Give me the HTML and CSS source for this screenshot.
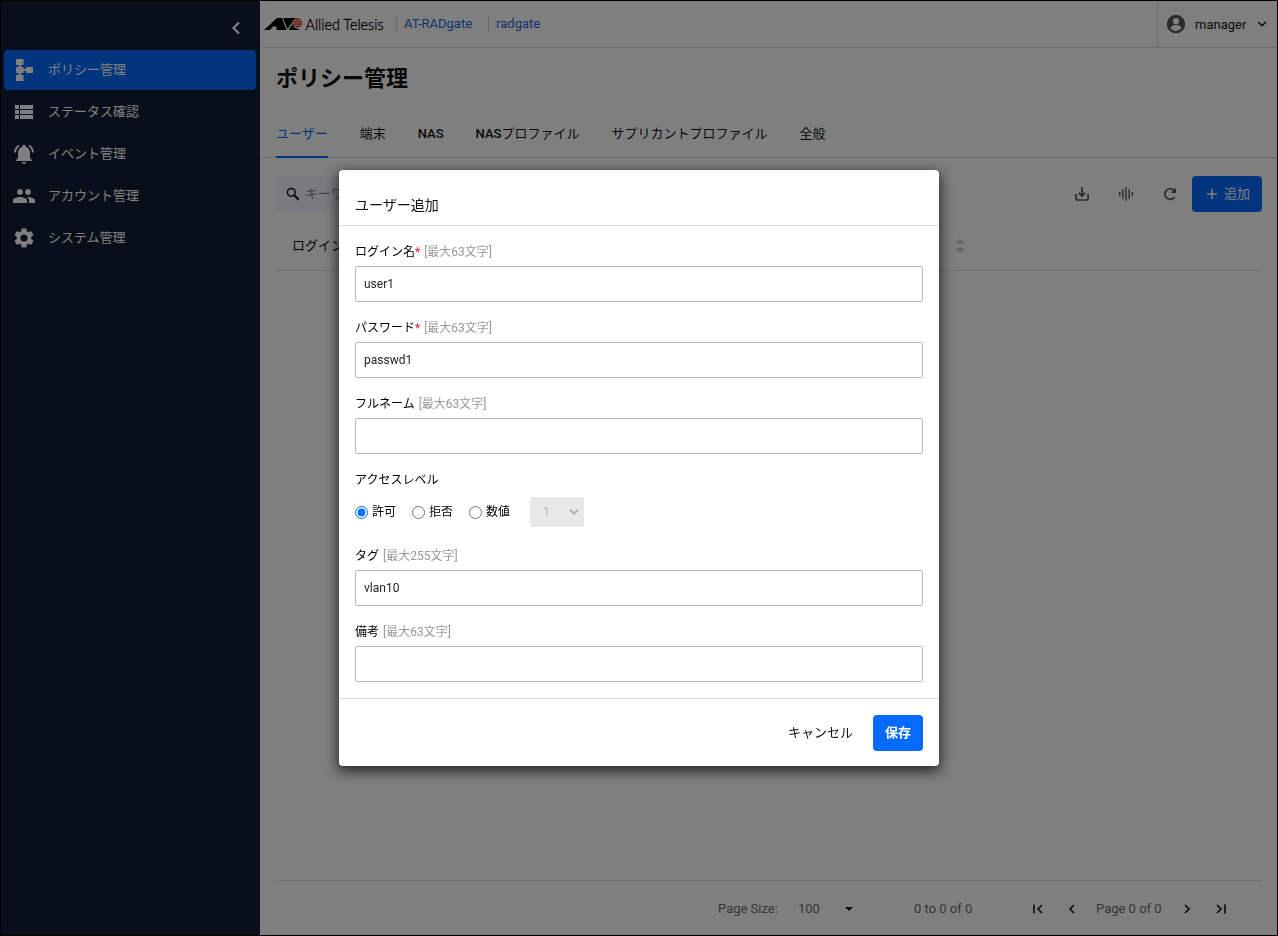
FILE: index.html
```html
<!DOCTYPE html>
<html lang="ja">
<head>
<meta charset="utf-8">
<title>ポリシー管理</title>
<link rel="stylesheet" href="styles.css">
</head>
<body>
<div class="app">
  <aside class="sidebar">
    <div class="collapse">
      <svg width="24" height="24" viewBox="0 0 24 24" fill="none" stroke="currentColor" stroke-width="2.2"><path d="M15 6.500 9.500 12l5.500 5.500"/></svg>
    </div>
    <nav class="menu">
      <a class="menu-item active"><svg width="24" height="24" viewBox="0 0 24 24" fill="currentColor"><path d="M4 1h7.500v6H9v2h2.500v2H14V9h7v6h-7v-2h-2.500v2H9v2h2.500v6H4v-6h2.500v-2H4V9h2.500V7H4z"/></svg><span>ポリシー管理</span></a>
      <a class="menu-item"><svg width="24" height="24" viewBox="0 0 24 24" fill="currentColor"><path d="M3 5h4v4H3zm5 0h13v4H8zM3 10h4v4H3zm5 0h13v4H8zM3 15h4v4H3zm5 0h13v4H8z"/></svg><span>ステータス確認</span></a>
      <a class="menu-item"><svg width="24" height="24" viewBox="0 0 24 24" fill="currentColor"><path d="M7.580 4.080 6.150 2.650C3.750 4.480 2.170 7.300 2.030 10.500h2a8.450 8.450 0 0 1 3.550-6.420zm12.390 6.420h2c-.15-3.200-1.730-6.020-4.120-7.850l-1.420 1.430a8.500 8.500 0 0 1 3.540 6.420zM18 11c0-3.070-1.640-5.640-4.500-6.320V4a1.500 1.500 0 0 0-3 0v.68C7.630 5.360 6 7.920 6 11v5l-2 2v1h16v-1l-2-2zm-6 11c.14 0 .27-.01.400-.04.650-.14 1.180-.58 1.440-1.180.1-.24.150-.5.150-.78h-4c.01 1.100.9 2 2.010 2z"/></svg><span>イベント管理</span></a>
      <a class="menu-item"><svg width="24" height="24" viewBox="0 0 24 24" fill="currentColor"><path d="M16 11c1.660 0 2.990-1.340 2.990-3S17.660 5 16 5s-3 1.340-3 3 1.340 3 3 3zm-8 0c1.660 0 2.990-1.340 2.990-3S9.660 5 8 5 5 6.340 5 8s1.340 3 3 3zm0 2c-2.330 0-7 1.170-7 3.500V19h14v-2.500C15 14.170 10.330 13 8 13zm8 0c-.29 0-.62.020-.97.050 1.160.84 1.970 1.970 1.970 3.450V19h6v-2.500c0-2.330-4.670-3.500-7-3.500z"/></svg><span>アカウント管理</span></a>
      <a class="menu-item"><svg width="24" height="24" viewBox="0 0 24 24" fill="currentColor"><path d="M19.140 12.940c.04-.3.060-.61.060-.94 0-.32-.02-.64-.07-.94l2.030-1.580c.18-.14.230-.41.120-.61l-1.920-3.320c-.12-.22-.37-.29-.59-.22l-2.390.96c-.5-.38-1.030-.7-1.620-.94l-.36-2.540c-.04-.24-.24-.41-.48-.41h-3.840c-.24 0-.43.170-.47.410l-.36 2.540c-.59.240-1.130.570-1.620.94l-2.390-.96c-.22-.08-.47 0-.59.220L2.740 8.870c-.12.210-.08.470.12.610l2.030 1.580c-.05.300-.09.630-.09.940s.02.640.07.940l-2.030 1.580c-.18.140-.23.410-.12.610l1.920 3.320c.12.220.37.290.59.220l2.390-.96c.5.380 1.030.7 1.620.94l.36 2.540c.05.240.24.410.48.410h3.840c.24 0 .44-.17.470-.41l.36-2.540c.59-.24 1.130-.56 1.620-.94l2.390.96c.22.080.47 0 .59-.22l1.920-3.320c.12-.22.070-.47-.12-.61zM12 15.600A3.600 3.600 0 1 1 12 8.400a3.600 3.600 0 0 1 0 7.200z"/></svg><span>システム管理</span></a>
    </nav>
  </aside>
  <main class="main">
    <header class="topbar">
      <svg class="logo" width="122" height="22" viewBox="0 0 122 22">
        <path fill="#000" d="M0 17 13 5h5l4.500 12H12.500v-3.500H9L6 17z"/>
        <path fill="#000" d="M19 5h12.500l-8 11z"/>
        <path fill="#000" d="M31 8l-6.500 9H36l-3.500-1.500-3-1.500 2.500-3z"/>
        <circle cx="33.700" cy="10" r="4.700" fill="#d9342b"/>
        <path stroke="#fff" stroke-width=".8" d="M28.800 7.500h10M28.800 9.900h10M28.800 12.300h10"/>
        <text class="logo-text" x="41.500" y="16.500" textLength="78" lengthAdjust="spacingAndGlyphs">Allied Telesis</text>
      </svg>
      <a class="crumb">AT-RADgate</a>
      <a class="crumb crumb-last">radgate</a>
      <div class="account">
        <svg width="22" height="22" viewBox="0 0 24 24" fill="#555"><path d="M12 2a10 10 0 1 0 0 20 10 10 0 0 0 0-20zm0 3.500a3.400 3.400 0 1 1 0 6.800 3.400 3.400 0 0 1 0-6.800zm0 14c-2.500 0-4.710-1.280-6-3.220.03-1.990 4-3.080 6-3.080s5.970 1.090 6 3.080A7.200 7.200 0 0 1 12 19.500z"/></svg>
        <span>manager</span>
        <svg width="10" height="8" viewBox="0 0 10 8" fill="none" stroke="#111" stroke-width="1.500"><path d="M1.200 2 5 5.800 8.800 2"/></svg>
      </div>
    </header>
    <h1 class="title">ポリシー管理</h1>
    <div class="tabs">
      <a class="tab selected">ユーザー</a><a class="tab">端末</a><a class="tab"><b>NAS</b></a><a class="tab"><b>NAS</b>プロファイル</a><a class="tab">サプリカントプロファイル</a><a class="tab">全般</a>
    </div>
    <div class="toolbar">
      <div class="search">
        <svg width="14" height="14" viewBox="0 0 14 14" fill="none" stroke="#111"><circle cx="5.300" cy="5.300" r="3.900" stroke-width="1.500"/><path d="M8.300 8.300 12.700 12.700" stroke-width="2"/></svg>
        <span>キーワード</span>
      </div>
      <div class="tools">
        <svg width="16" height="16" viewBox="0 0 16 16" fill="none" stroke="#555" stroke-width="1.700"><path d="M8 1v9M4.700 6.800 8 10l3.300-3.200M1.900 8v4.800q0 1.200 1.200 1.200h9.800q1.200 0 1.200-1.200V8"/></svg>
        <svg width="16" height="16" viewBox="0 0 16 16" fill="none" stroke="#5c5c5c" stroke-width="1.400"><path d="M1.700 6v4M4.800 3v10M8 1v14M11.200 3v10M14.300 6v4"/></svg>
        <svg width="16" height="16" viewBox="0 0 16 16" fill="none" stroke="#555" stroke-width="1.700"><path d="M12.600 11A5.300 5.300 0 1 1 12.200 4.600"/><path d="M14 1.800V7H8.800z" fill="#555" stroke="none"/></svg>
      </div>
      <button class="btn-add"><svg width="12" height="12" viewBox="0 0 12 12" stroke="#fff" stroke-width="1.600"><path d="M1 6h10M6 1v10"/></svg><span>追加</span></button>
    </div>
    <div class="table-head">
      <span>ログイン名</span>
      <svg class="sort" width="10" height="14" viewBox="0 0 10 14" fill="#ccc"><path d="M0 5 5 0l5 5zM0 9h10l-5 5z"/></svg>
    </div>
    <div class="grid-body"></div>
    <footer class="pager">
      <span class="page-size">Page Size:</span>
      <span class="size-value">100</span>
      <svg class="caret" width="8" height="4" viewBox="0 0 8 4" fill="#111"><path d="M0 0h8L4 4z"/></svg>
      <span class="rows">0 to 0 of 0</span>
      <svg class="first" width="12" height="12" viewBox="0 0 12 12" fill="none" stroke="#111" stroke-width="1.600"><path d="M2 1.500v9M10 2 6 6l4 4"/></svg>
      <svg class="prev" width="12" height="12" viewBox="0 0 12 12" fill="none" stroke="#111" stroke-width="1.600"><path d="M8 2 4 6l4 4"/></svg>
      <span class="page-no">Page 0 of 0</span>
      <svg class="next" width="12" height="12" viewBox="0 0 12 12" fill="none" stroke="#111" stroke-width="1.600"><path d="M4 2l4 4-4 4"/></svg>
      <svg class="last" width="12" height="12" viewBox="0 0 12 12" fill="none" stroke="#111" stroke-width="1.600"><path d="M2 2l4 4-4 4M10 1.500v9"/></svg>
    </footer>
  </main>
</div>
<div class="overlay">
  <section class="modal">
    <h2 class="modal-head">ユーザー追加</h2>
    <form class="modal-body">
      <div class="field"><label class="label">ログイン名<i>*</i><em>[最大63文字]</em></label><input class="input" value="user1"></div>
      <div class="field"><label class="label">パスワード<i>*</i><em>[最大63文字]</em></label><input class="input" value="passwd1"></div>
      <div class="field"><label class="label">フルネーム<em>[最大63文字]</em></label><input class="input"></div>
      <div class="field">
        <span class="label">アクセスレベル</span>
        <div class="radios">
          <label class="radio"><input type="radio" name="level" checked>許可</label>
          <label class="radio"><input type="radio" name="level">拒否</label>
          <label class="radio"><input type="radio" name="level">数値</label>
          <div class="select"><span>1</span><svg width="10" height="8" viewBox="0 0 10 8" fill="none" stroke="#b0b0b0" stroke-width="2"><path d="M1 1.700 5 5.700 9 1.700"/></svg></div>
        </div>
      </div>
      <div class="field"><label class="label">タグ<em>[最大255文字]</em></label><input class="input" value="vlan10"></div>
      <div class="field"><label class="label">備考<em>[最大63文字]</em></label><input class="input"></div>
    </form>
    <div class="modal-foot"><button class="btn-cancel">キャンセル</button><button class="btn-save">保存</button></div>
  </section>
</div>
</body>
</html>
```

FILE: styles.css
```css
* { box-sizing: border-box; }
body { margin: 0; font-family: Roboto, "Noto Sans CJK JP", sans-serif; font-size: 13px; color: #111; }
svg { display: block; flex: none; }
button, input { font-family: inherit; }
.app { display: flex; width: 1278px; height: 936px; border: 1px solid #000; background: #fff; }

.sidebar { width: 259px; flex: none; background: #101e34; color: #fff; }
.collapse { height: 49px; display: flex; justify-content: flex-end; align-items: center; padding: 5px 12px 0 0; }
.menu { padding: 0 4px 0 3px; display: flex; flex-direction: column; gap: 2px; }
.menu-item { height: 40px; display: flex; align-items: center; gap: 12px; padding-left: 8px; border-radius: 4px; line-height: 20px; }
.menu-item.active { background: #066aff; }

.main { flex: 1; min-width: 0; display: flex; flex-direction: column; }
.topbar { height: 47px; flex: none; display: flex; align-items: center; padding-left: 4px; border-bottom: 1px solid #d8d8d8; }
.logo { overflow: visible; }
.logo-text { font-family: Lato, sans-serif; font-size: 16px; font-weight: 300; fill: #000; stroke: #000; stroke-width: .3px; }
.crumb { margin-left: 10px; padding-left: 7px; border-left: 1px solid #d0d0d0; height: 16px; line-height: 15px; color: #1c66dd; }
.crumb-last { margin-left: 16px; }
.account { margin-left: auto; width: 120px; height: 46px; border-left: 1px solid #d8d8d8; display: flex; align-items: center; padding-left: 7px; }
.account span { margin: 0 0 0 8px; width: 62px; }

.title { margin: 0; height: 62px; flex: none; padding-left: 16px; font-size: 22px; line-height: 62px; font-weight: 700; }
.tabs { height: 48px; flex: none; display: flex; gap: 32px; padding-left: 16px; border-bottom: 1px solid #d8d8d8; }
.tab { height: 48px; line-height: 48px; white-space: nowrap; }
.tab b { font-weight: 500; }
.tab.selected { color: #066aff; border-bottom: 2px solid #066aff; }

.toolbar { height: 72px; flex: none; display: flex; align-items: center; padding: 0 15px 0 16px; }
.search { width: 240px; height: 36px; display: flex; align-items: center; gap: 5px; padding-left: 10px; background: #f4f7fc; color: #858585; border-radius: 2px; }
.search span { padding-bottom: 3px; }
.tools { margin-left: auto; display: flex; gap: 28px; }
.btn-add { width: 70px; height: 36px; margin-left: 14px; border: 0; border-radius: 4px; background: #066aff; color: #fff; font-size: 13px; display: flex; align-items: center; gap: 6px; padding: 0 0 0 14px; }
.btn-add span { padding-bottom: 3px; }
.table-head { height: 41px; flex: none; margin: 0 15px 0 16px; padding: 0 297px 9px 16px; display: flex; align-items: center; justify-content: space-between; border-bottom: 1px solid #d8d8d8; }
.table-head span { padding-bottom: 2px; }
.grid-body { flex: 1; }
.pager { height: 55px; flex: none; margin: 0 15px 0 16px; border-top: 1px solid #d8d8d8; display: flex; align-items: center; padding: 2px 35px 0 442px; color: #6c6c6c; white-space: nowrap; }
.pager span { padding-bottom: 2px; }
.page-size { width: 80px; }
.size-value { width: 47px; }
.rows { margin-left: 61px; width: 117px; }
.first { margin-left: 1px; }
.prev { margin-left: 22px; }
.page-no { margin-left: 18px; width: 85px; }
.last { margin-left: 22px; }

.overlay { position: fixed; inset: 0; background: rgba(0,0,0,.5); display: flex; align-items: center; justify-content: center; }
.modal { width: 600px; height: 596px; background: #fff; border-radius: 4px; box-shadow: 0 4px 14px 1px rgba(0,0,0,.75); }
.modal-head { margin: 0; height: 56px; padding: 12px 16px 0; border-bottom: 1px solid #ddd; font-size: 14px; font-weight: 400; line-height: 46px; }
.modal-body { padding: 16px; display: flex; flex-direction: column; gap: 16px; }
.field { display: flex; flex-direction: column; gap: 6px; }
.label { height: 18px; line-height: 20px; font-size: 12px; color: #000; }
.label i { color: #f02020; font-style: normal; }
.label em { color: #999; font-style: normal; margin-left: 4px; }
.input { width: 100%; height: 36px; border: 1px solid #b9b9b9; border-radius: 2px; padding: 0 8px; font-size: 12px; color: #222; background: #fff; outline: 0; }
.radios { height: 36px; display: flex; align-items: center; }
.radio { width: 57px; display: flex; align-items: center; font-size: 12px; line-height: 18px; color: #000; }
.radio input { margin: 0 4px 0 0; width: 13px; height: 13px; }
.select { width: 54px; height: 30px; margin-left: 4px; padding: 0 5px 0 13px; display: flex; align-items: center; justify-content: space-between; background: #e8e8e8; color: #b5b5b5; border-radius: 2px; font-size: 12px; }
.modal-foot { height: 68px; border-top: 1px solid #ddd; padding: 16px 16px 0; display: flex; justify-content: flex-end; gap: 8px; }
.btn-cancel, .btn-save { height: 36px; border: 0; border-radius: 4px; padding: 0 12px 4px; font-size: 13px; color: #111; background: transparent; }
.btn-save { width: 50px; padding: 0 0 4px; background: #066aff; color: #fff; font-weight: 700; }
```
